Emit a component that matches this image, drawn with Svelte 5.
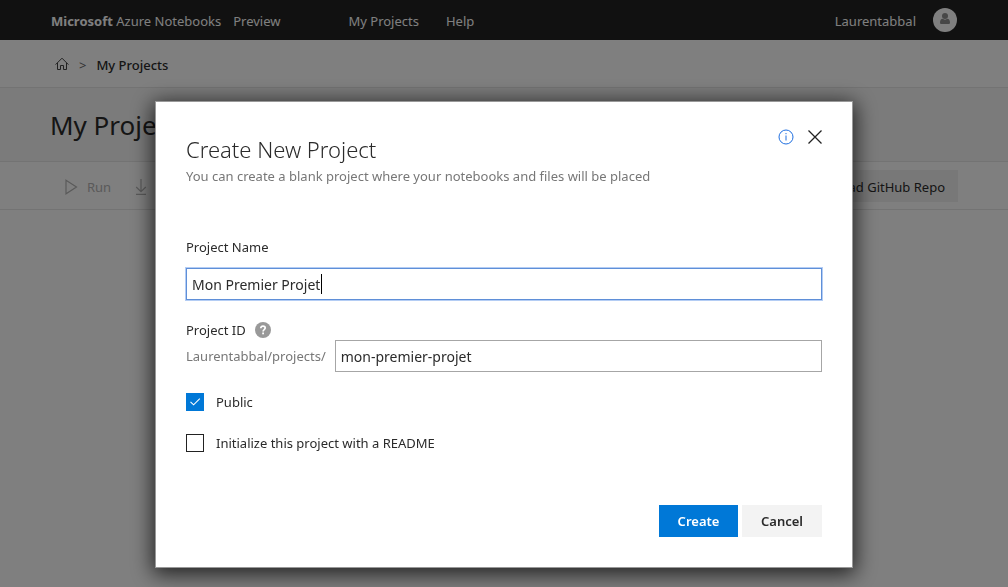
<script>
  let open = $state(true);
  let name = $state('Mon Premier Projet');
  let id = $state('mon-premier-projet');
  let isPublic = $state(true);
  let readme = $state(false);
</script>

<div class="page">
  <header class="topbar">
    <a class="brand" href="#home"><b>Microsoft</b> Azure Notebooks</a>
    <span class="preview">Preview</span>
    <nav class="menu">
      <a href="#projects">My Projects</a>
      <a href="#help">Help</a>
    </nav>
    <a class="user" href="#profile">
      <span>Laurentabbal</span>
      <svg width="24" height="24" viewBox="0 0 24 24" aria-hidden="true">
        <circle cx="12" cy="12" r="12" fill="#fff" />
        <path d="M7 14.500C7 12.200 8.200 11 9.500 10.800C11 11.900 13 11.900 14.500 10.800C15.800 11 17 12.200 17 14.500C17 15.600 16.400 16 15.600 16H8.400C7.600 16 7 15.600 7 14.500Z" fill="#8f8f8f" />
        <circle cx="12" cy="8" r="3" fill="#8f8f8f" />
      </svg>
    </a>
  </header>

  <nav class="crumbs" aria-label="Breadcrumb">
    <a href="#home" aria-label="Home">
      <svg width="14" height="14" viewBox="0 0 14 14" fill="none" stroke="#444" aria-hidden="true">
        <path d="M.6 7.600L7 1.200L13.400 7.600M2.500 6V12.500H5.500V8.500H8.500V12.500H11.500V6" />
      </svg>
    </a>
    <span class="sep">&gt;</span>
    <span>My Projects</span>
  </nav>

  <div class="titlebar"><h1>My Projects</h1></div>

  <div class="toolbar">
    <button class="tool" disabled>
      <svg width="13" height="16" viewBox="0 0 13 16" fill="none" stroke="currentColor" stroke-width="1.200" aria-hidden="true">
        <path d="M1 1.200L11.500 8L1 14.800Z" />
      </svg>
      Run
    </button>
    <button class="tool" disabled aria-label="Download">
      <svg width="12" height="16" viewBox="0 0 12 16" fill="none" stroke="currentColor" stroke-width="1.200" aria-hidden="true">
        <path d="M6 0V12.500M1.200 8L6 12.700L10.800 8M1 15.400H11" />
      </svg>
    </button>
    <button class="upload">Upload GitHub Repo</button>
  </div>
</div>

{#if open}
  <div class="overlay">
    <div class="dialog" role="dialog" aria-modal="true" aria-labelledby="dialog-title">
      <div class="head">
        <div>
          <h2 id="dialog-title">Create New Project</h2>
          <p>You can create a blank project where your notebooks and files will be placed</p>
        </div>
        <div class="head-actions">
          <button class="icon" aria-label="Information">
            <svg width="16" height="16" viewBox="0 0 16 16" fill="none" stroke="#1f6fe0" aria-hidden="true">
              <circle cx="8" cy="8" r="7" />
              <path d="M8 6.500V11.500M8 4V5.200" />
            </svg>
          </button>
          <button class="icon" aria-label="Close" onclick={() => (open = false)}>
            <svg width="14" height="16" viewBox="0 0 14 16" fill="none" stroke="#222" stroke-width="1.300" aria-hidden="true">
              <path d="M.5 1.500L13.500 14.500M13.500 1.500L.5 14.500" />
            </svg>
          </button>
        </div>
      </div>

      <form onsubmit={(e) => e.preventDefault()}>
        <label class="caption" for="project-name">Project Name</label>
        <div class="field">
          <input class="text active" id="project-name" type="text" bind:value={name} />
          <span class="caret"></span>
        </div>

        <div class="id-label">
          <label for="project-id">Project ID</label>
          <svg width="16" height="16" viewBox="0 0 16 16" aria-hidden="true">
            <circle cx="8" cy="8" r="8" fill="#999" />
            <path d="M5.800 6.300C5.800 4.900 6.700 4.200 8 4.200C9.300 4.200 10.200 4.900 10.200 6.100C10.200 7.600 8.100 7.600 8.100 9.400" fill="none" stroke="#fff" stroke-width="1.700" />
            <rect x="7.200" y="10.500" width="1.800" height="1.800" fill="#fff" />
          </svg>
        </div>
        <div class="id-row">
          <span class="prefix">Laurentabbal/projects/</span>
          <input class="text" id="project-id" type="text" bind:value={id} />
        </div>

        <label class="check first"><input type="checkbox" bind:checked={isPublic} />Public</label>
        <label class="check"><input type="checkbox" bind:checked={readme} />Initialize this project with a README</label>

        <div class="buttons">
          <button class="primary" type="submit">Create</button>
          <button class="secondary" type="button" onclick={() => (open = false)}>Cancel</button>
        </div>
      </form>
    </div>
  </div>
{/if}

<style>
  :global(body) {
    margin: 0;
    background: #fff;
    color: #2b2b2b;
    font: 13px/20px 'Noto Sans', 'Open Sans', sans-serif;
  }
  a { color: inherit; text-decoration: none; }
  button, input { font: inherit; color: inherit; }
  button { border: 0; }
  h1, h2, p { margin: 0; }
  svg { display: block; flex: none; }

  .topbar {
    display: flex;
    align-items: center;
    height: 40px;
    padding: 0 51px;
    background: #222;
    color: #fff;
  }
  .preview { margin-left: 12px; }
  .menu { display: flex; gap: 27px; margin-left: 68px; }
  .user { display: flex; align-items: center; gap: 17px; margin-left: auto; }
  .brand, .preview, .menu, .user span { padding-top: 2px; }

  .crumbs {
    display: flex;
    align-items: center;
    gap: 10px;
    height: 47px;
    padding: 0 55px;
    border-bottom: 1px solid #e6e6e6;
    font-weight: 500;
  }
  .crumbs span { padding-top: 2px; }
  .crumbs .sep { color: #666; font-weight: 400; }

  .titlebar {
    display: flex;
    align-items: center;
    height: 73px;
    padding: 0 50px;
    background: #f6f6f6;
    border-bottom: 1px solid #e6e6e6;
  }
  h1 { font-size: 26px; line-height: 36px; font-weight: 400; }

  .toolbar {
    display: flex;
    align-items: center;
    gap: 24px;
    height: 47px;
    padding: 0 50px 0 65px;
    border-bottom: 1px solid #e6e6e6;
  }
  .tool {
    display: flex;
    align-items: center;
    gap: 9px;
    padding: 2px 0 0;
    background: none;
    color: #b4b4b4;
  }
  .upload { margin-left: auto; height: 32px; padding: 2px 13px 0; background: #f0f0f0; }

  .overlay {
    position: fixed;
    inset: 0;
    padding: 101px 24px 0;
    background: rgba(0, 0, 0, 0.5);
  }
  .dialog {
    box-sizing: border-box;
    max-width: 698px;
    margin: 0 auto;
    padding: 24px 30px 30px;
    background: #fff;
    border: 1px solid #999;
    box-shadow: 0 4px 20px 2px rgba(0, 0, 0, 0.75);
  }
  .head { display: flex; justify-content: space-between; }
  h2 { font-size: 22px; line-height: 46px; font-weight: 300; }
  p { margin-top: -6px; color: #777; }
  .head-actions { display: flex; align-items: flex-start; gap: 14px; padding-top: 3px; }
  .icon { padding: 0; background: none; }

  form { margin-top: 51px; }
  .caption { display: block; }
  .field { position: relative; display: flex; margin: 11px 0 20px; }
  .text {
    box-sizing: border-box;
    flex: 1;
    min-width: 0;
    height: 32px;
    padding: 0 5px;
    border: 1px solid #a6a6a6;
    outline: 0;
    background: #fff;
    font-size: 14px;
  }
  .active { border-color: #5f8fd8; box-shadow: 0 0 0 1px #b4cdf4; }
  .caret { position: absolute; left: 135px; top: 6px; width: 1px; height: 20px; background: #000; }
  .id-label { display: flex; align-items: center; gap: 9px; }
  .id-row { display: flex; align-items: center; gap: 9px; }
  .prefix { color: #777; }

  .check { display: flex; align-items: center; gap: 12px; margin-top: 21px; }
  .first { margin-top: 20px; }
  .check input {
    appearance: none;
    box-sizing: border-box;
    width: 18px;
    height: 18px;
    margin: 0;
    border: 1px solid #222;
  }
  .check input:checked {
    border-color: #0078d7;
    background: #0078d7 url("data:image/svg+xml,%3Csvg xmlns='http://www.w3.org/2000/svg' viewBox='0 0 16 16'%3E%3Cpath d='M3.500 7.800L6.600 10.800L12.800 4.600' fill='none' stroke='white' stroke-width='1.100'/%3E%3C/svg%3E");
  }
  .buttons { display: flex; justify-content: flex-end; gap: 4px; margin-top: 52px; }
  .buttons button { height: 32px; padding: 0; font-weight: 600; }
  .buttons .primary { width: 79px; background: #0078d7; color: #fff; }
  .buttons .secondary { width: 80px; background: #f3f3f3; }
</style>
